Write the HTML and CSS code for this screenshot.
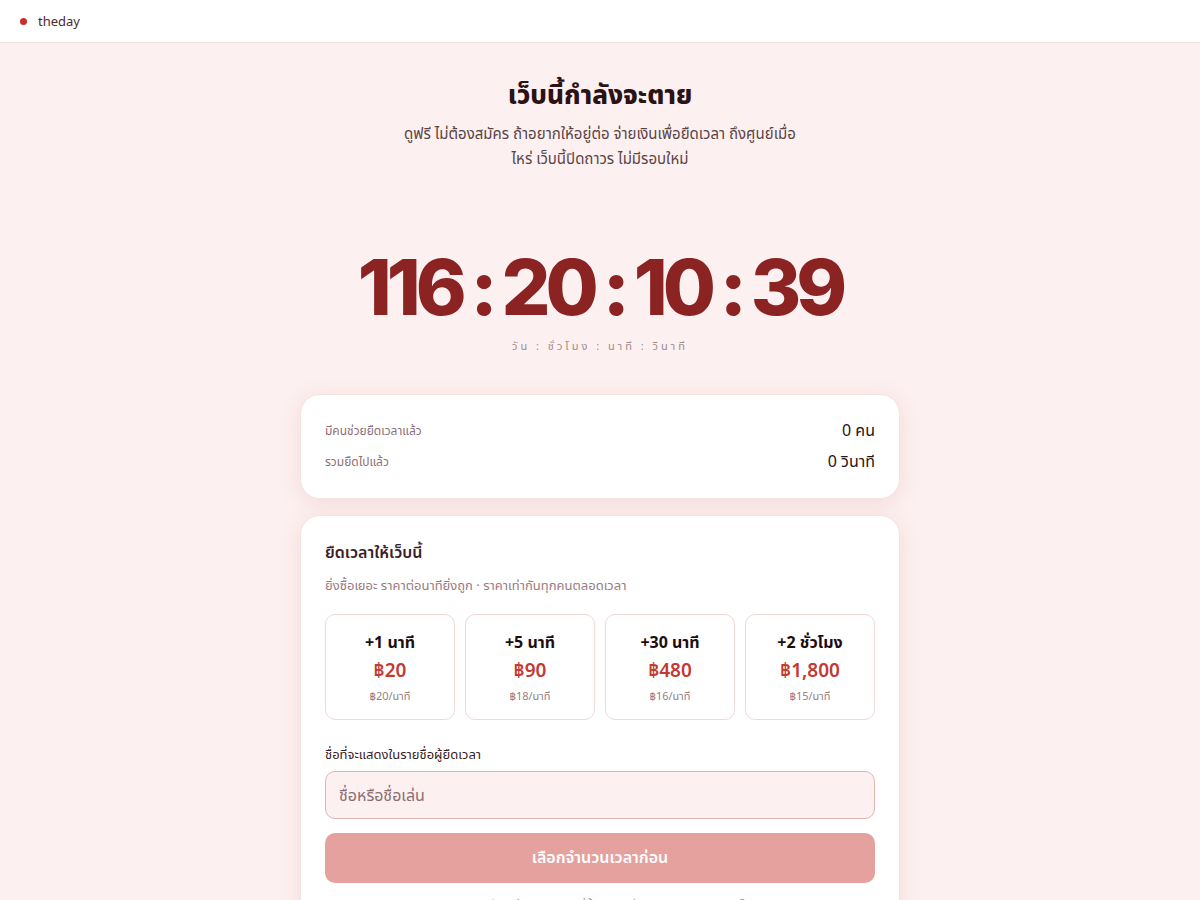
FILE: index.html
```html
<!DOCTYPE html>
<html lang="th">
<head>
<meta charset="utf-8">
<title>theday</title>
<link rel="stylesheet" href="styles.css">
</head>
<body>
<header class="topbar">
  <span class="dot"></span>
  <span class="brand">theday</span>
</header>
<main class="page">
  <section class="hero">
    <h1 class="title">เว็บนี้กำลังจะตาย</h1>
    <p class="lead">ดูฟรี ไม่ต้องสมัคร ถ้าอยากให้อยู่ต่อ จ่ายเงินเพื่อยืดเวลา ถึงศูนย์เมื่อ<br>ไหร่ เว็บนี้ปิดถาวร ไม่มีรอบใหม่</p>
  </section>
  <section class="countdown">
    <div class="clock">116 : 20 : 10 : 39</div>
    <div class="clock-label">วัน : ชั่วโมง : นาที : วินาที</div>
  </section>
  <section class="card stats">
    <div class="stat-row">
      <span class="stat-label">มีคนช่วยยืดเวลาแล้ว</span>
      <span class="stat-value">0 คน</span>
    </div>
    <div class="stat-row">
      <span class="stat-label">รวมยืดไปแล้ว</span>
      <span class="stat-value">0 วินาที</span>
    </div>
  </section>
  <section class="card extend">
    <h2 class="extend-title">ยืดเวลาให้เว็บนี้</h2>
    <p class="extend-sub">ยิ่งซื้อเยอะ ราคาต่อนาทียิ่งถูก · ราคาเท่ากันทุกคนตลอดเวลา</p>
    <div class="packs">
      <button class="pack"><span class="pack-time">+1 นาที</span><span class="pack-price">฿20</span><span class="pack-unit">฿20/นาที</span></button>
      <button class="pack"><span class="pack-time">+5 นาที</span><span class="pack-price">฿90</span><span class="pack-unit">฿18/นาที</span></button>
      <button class="pack"><span class="pack-time">+30 นาที</span><span class="pack-price">฿480</span><span class="pack-unit">฿16/นาที</span></button>
      <button class="pack"><span class="pack-time">+2 ชั่วโมง</span><span class="pack-price">฿1,800</span><span class="pack-unit">฿15/นาที</span></button>
    </div>
    <label class="field-label" for="name">ชื่อที่จะแสดงในรายชื่อผู้ยืดเวลา</label>
    <input class="field" id="name" type="text" placeholder="ชื่อหรือชื่อเล่น">
    <button class="submit" disabled>เลือกจำนวนเวลาก่อน</button>
    <p class="note">ชำระเงินผ่านพร้อมเพย์ เวลาที่ซื้อจะถูกเพิ่มทันทีหลังชำระเงินสำเร็จ</p>
  </section>
</main>
</body>
</html>
```
FILE: styles.css
```css
* { box-sizing: border-box; }
html, body { margin: 0; padding: 0; }
body {
  background: #fdf0f0;
  font-family: "Noto Sans", "Noto Sans Thai", "Open Sans", sans-serif;
  color: #2a1215;
}
.topbar {
  height: 43px;
  background: #ffffff;
  border-bottom: 1px solid #f1dede;
  display: flex;
  align-items: center;
  padding-left: 20px;
  gap: 11px;
}
.dot {
  width: 7px; height: 7px; border-radius: 50%;
  background: #c9302c;
}
.brand { font-size: 13px; color: #4a2a2e; }
.page {
  width: 600px;
  margin: 0 auto;
  display: flex;
  flex-direction: column;
}
.hero { text-align: center; padding-top: 32px; }
.title {
  margin: 0;
  font-size: 26px;
  font-weight: 800;
  color: #2a1215;
  line-height: 38px;
}
.lead {
  margin: 8px 0 0;
  font-size: 15px;
  line-height: 25px;
  color: #5a4446;
}
.countdown { text-align: center; margin-top: 71px; }
.clock {
  font-family: "Inter", sans-serif;
  font-size: 77px;
  font-weight: 800;
  letter-spacing: -5px;
  word-spacing: -3px;
  color: #8b2323;
  line-height: 90px;
}
.clock-label {
  margin-top: 6px;
  font-size: 11px;
  letter-spacing: 3px;
  color: #a08c8c;
}
.card {
  background: #ffffff;
  border-radius: 20px;
  box-shadow: 0 4px 20px rgba(200, 120, 120, 0.18);
  border: 1px solid #f6e4e4;
  padding: 24px;
}
.stats { margin-top: 39px; padding: 25px 24px 25px; display: flex; flex-direction: column; gap: 9px; }
.stat-row { display: flex; justify-content: space-between; align-items: center; height: 22px; }
.stat-label { font-size: 12px; color: #8e6e72; }
.stat-value { font-size: 16px; color: #2a1215; }
.extend { margin-top: 16px; padding: 24px 24px 40px; }
.extend-title { margin: 0; font-size: 16px; font-weight: 600; color: #3a2024; line-height: 24px; }
.extend-sub { margin: 11px 0 0; font-size: 13px; color: #9a7a7e; line-height: 20px; }
.packs {
  display: grid;
  grid-template-columns: repeat(4, 1fr);
  gap: 10px;
  margin-top: 19px;
}
.pack {
  height: 106px;
  background: #ffffff;
  border: 1px solid #f0d8d8;
  border-radius: 10px;
  display: flex;
  flex-direction: column;
  align-items: center;
  justify-content: center;
  font-family: inherit;
  padding: 0;
}
.pack-time { font-size: 16px; font-weight: 700; color: #1d0d10; line-height: 24px; }
.pack-price { font-size: 19px; font-weight: 600; color: #c23a32; line-height: 28px; margin-top: 2px; }
.pack-unit { font-size: 11px; color: #9a8084; line-height: 18px; margin-top: 3px; }
.field-label { margin-top: 24px; font-size: 13px; color: #3a2024; line-height: 20px; display: block; }
.field {
  margin-top: 7px;
  width: 100%;
  height: 48px;
  border: 1px solid #e3b4b4;
  border-radius: 10px;
  background: #fdf0f0;
  padding: 0 13px;
  font-size: 16px;
  font-family: inherit;
  color: #2a1215;
}
.field::placeholder { color: #8a6e72; }
.submit {
  margin-top: 14px;
  width: 100%;
  height: 50px;
  border: none;
  border-radius: 10px;
  background: #e5a19e;
  color: #ffffff;
  font-size: 16px;
  font-weight: 600;
  font-family: inherit;
}
.note { margin: 14px 0 0; font-size: 12px; color: #a08c8c; text-align: center; }
```
